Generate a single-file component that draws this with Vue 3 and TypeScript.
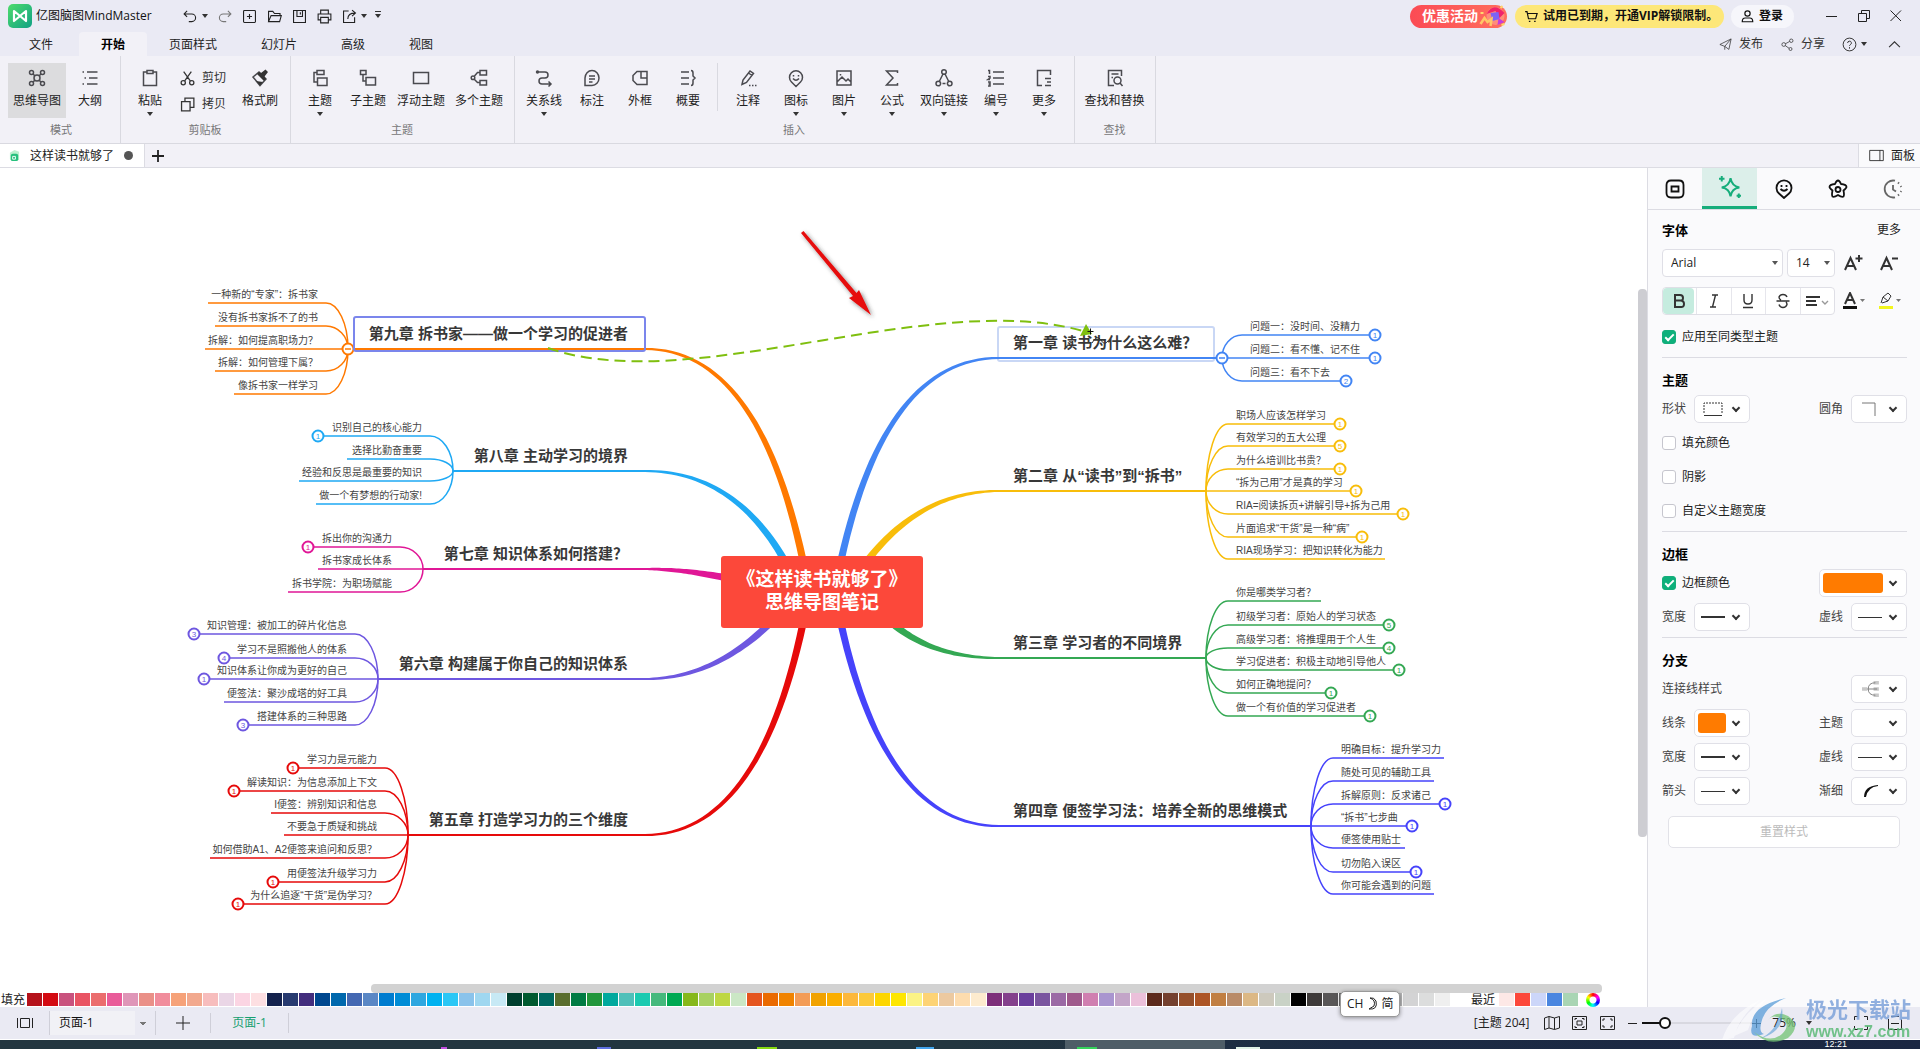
<script setup lang="ts">
import { ref } from 'vue'

interface Leaf {
  text: string
  y: number
  end: number
  badge?: number
}

interface Branch {
  title: string
  color: string
  side: 'left' | 'right'
  y: number
  tip: number
  node: number
  bend: number
  root: [number, number]
  control: number
  selected?: 'source' | 'target'
  leaves: Leaf[]
}

interface Tool {
  icon: string
  label: string
  wide?: boolean
  menu?: boolean
  split?: boolean
}

const circle = (x: number, y: number, r: number) =>
  `M${x - r} ${y}a${r} ${r} 0 1 0 ${2 * r} 0a${r} ${r} 0 1 0 ${-2 * r} 0`

const icons: Record<string, string> = {
  undo: 'M6 3.500L2.500 7L6 10.500M2.500 7H11.500a4.500 4.500 0 0 1 0 9H8',
  redo: 'M14 3.500L17.500 7L14 10.500M17.500 7H8.500a4.500 4.500 0 0 0 0 9H12',
  create: 'M4 3H16a1 1 0 0 1 1 1V16a1 1 0 0 1-1 1H4a1 1 0 0 1-1-1V4a1 1 0 0 1 1-1M10 7V13M7 10H13',
  open: 'M3 16V4H8L10 6.500H16.500V9M3 16L6 9H18L16 16Z',
  save: 'M3 3H17V17H3ZM7 3V10H13.500V3M11 5V7.500',
  print: 'M5.500 7V2.500H14.500V7M5.500 14H2.500V7H17.500V14H14.500M5.500 11H14.500V17.500H5.500Z',
  exportFile: 'M9 3.500H3V17H16V11M8 13C8 8 11 6 16.500 6M13 2.500L17 6L13 9.500',
  mind: circle(10, 10, 3) + circle(4.5, 4.5, 2) + circle(15.5, 4.5, 2) + circle(4.5, 15.5, 2) + circle(15.5, 15.5, 2) + 'M6 6L8 8M14 6L12 8M6 14L8 12M14 14L12 12',
  outline: 'M7 4H17.500M9 10H17.500M7 16H17.500M2.500 4H4M4.500 10H6M2.500 16H4',
  paste: 'M7 4H3.500V17.500H16.500V4H13M7 2.500H13V5.500H7Z',
  cut: circle(5, 15, 2.5) + circle(15, 15, 2.5) + 'M6.500 13L14.500 2M13.500 13L5.500 2',
  copy: 'M3 6.500H13V17.500H3ZM7 6V2.500H17.500V13.500H13.500',
  topic: 'M7 2.500H14V6.500H7ZM7 4.500H4V14H7M7.500 10H17V17.500H7.500Z',
  subtopic: 'M2.500 2.500H8V6.500H2.500ZM5 6.500V13H8M8 9.500H17.500V17H8Z',
  floating: 'M2.500 4.500H17.500V15.500H2.500Z',
  multi: 'M11 2.500H17.500V7H11ZM11 12.500H17.500V17H11ZM11 4.500H8.500L5.500 8M5.500 11.500L8.500 14.500H11' + circle(4, 9.7, 1.8),
  relation: 'M3 4H11a3 3 0 0 1 0 6H8a3 3 0 0 0 0 6H17M14.500 13.500L17 16L14.500 18.500' + circle(3.5, 4, 1),
  callout: 'M3 17.500V10a7 7.500 0 1 1 7 7.500ZM7 8H13M7 11H13M7 14H10.500',
  boundary: 'M7 3.500H17V16.500H7L3 12.500V7.500ZM11 3.500V10H17',
  summary: 'M3 4H11M3 10H11M3 16H11M13 2.500Q15 2.500 15 5V8L17 10L15 12V15Q15 17.500 13 17.500',
  note: 'M4 16.500L5 12L12 3L15.500 5.500L8.500 14.500ZM10.500 5L14 7.500M11 17.500H12.500M14 17.500H15.500M17 17.500H18.500',
  marker: 'M10 18.500L5.500 14A6.500 6.500 0 1 1 14.500 14ZM7.500 7V8.500M12.500 7V8.500M7 10.500Q10 14 13 10.500',
  picture: 'M3 3H17V17H3ZM3 14L8 9L12 13L14 11L17 14M6.500 6V7.500',
  formula: 'M15.500 5V3H4.500L11 10L4.500 17H15.500V15',
  link: circle(10, 4, 2.3) + circle(4.3, 15.5, 2.3) + circle(15.7, 15.5, 2.3) + 'M9 6L5.500 13M11 6L14.500 13M8.500 15.500H11.500',
  numbering: 'M7 4H18M7 10H18M7 16H18M2 2.500H3.500V6M2 8.500H4V10L2 11.500H4M2 14H4V18H2M2.500 16H4',
  more: 'M8 17.500H3.500V2.500H16.500V7M11 10.500H17M13 14H17M11 17.500H17',
  find: 'M16.500 8V2.500H3.500V17.500H9M6.500 6H13.500M6.500 9.500H8' + circle(12.5, 12.5, 3.5) + 'M15 15L17.500 18',
  cart: 'M1.500 3.500H4L6 13H15.500L17.500 6H5M6.500 16.500H8.500M13.500 16.500H15.500',
  user: circle(10, 6, 3.5) + 'M3 17Q3 12 7 12H13Q17 12 17 17Z',
  send: 'M2.500 10L17.500 2.500L14.500 16.500L9 12.500ZM17 3L9 12.500V17',
  share: circle(5, 10, 2.5) + circle(15, 5, 2.3) + circle(14, 16, 2) + 'M7.200 9L12.800 6M7 11.500L12 15',
  help: circle(10, 10, 8.5) + 'M7.500 8a2.500 2.500 0 1 1 3.500 2.300Q10 11 10 12M10 13.500V15.500',
  panel: 'M2 4H18V16H2ZM14 4V16',
  tabShape: 'M6 1.500H14Q18.500 1.500 18.500 6V14Q18.500 18.500 14 18.500H6Q1.500 18.500 1.500 14V6Q1.500 1.500 6 1.500M6.500 7.500H13.500V12.500H6.500Z',
  tabStyle: 'M10.500 2Q11.500 9 18.500 10.500Q11.500 11.500 10.500 18.500Q9.500 11.500 2.500 10.500Q9.500 9 10.500 2M2.500 0V5M0 2.500H5M18 16V20M16 18H20',
  tabSticker: 'M10 19L5 14.500A7.500 7.500 0 1 1 15 14.500ZM7.500 6V8M12.500 6V8M6.500 10Q10 13.500 13.500 10',
  tabClip: 'M10 1.500Q11.500 1.500 13 5Q18.500 5.500 18.500 8Q18.500 9 15.500 11.500Q16.500 16 15.500 17.500Q14 18.500 10 16Q6 18.500 4.500 17.500Q3.500 16 4.500 11.500Q1.500 9 1.500 8Q1.500 5.500 7 5Q8.500 1.500 10 1.500' + circle(10, 10.5, 2.5),
  tabHistory: 'M12 18.300A8.500 8.500 0 1 1 12 1.700M10 6V10.500L13 12.500M15 3.500L16 4.500M17.700 7L18.200 8M18.200 12L17.700 13M16 15.500L15 16.500',
}

const quick = ['create', 'open', 'save', 'print']
const menus = ['文件', '开始', '页面样式', '幻灯片', '高级', '视图']

const topicTools: Tool[] = [
  { icon: 'topic', label: '主题', menu: true },
  { icon: 'subtopic', label: '子主题' },
  { icon: 'floating', label: '浮动主题', wide: true },
  { icon: 'multi', label: '多个主题', wide: true },
]
const insertTools: Tool[] = [
  { icon: 'relation', label: '关系线', menu: true },
  { icon: 'callout', label: '标注' },
  { icon: 'boundary', label: '外框' },
  { icon: 'summary', label: '概要' },
  { icon: 'note', label: '注释', split: true },
  { icon: 'marker', label: '图标', menu: true },
  { icon: 'picture', label: '图片', menu: true },
  { icon: 'formula', label: '公式', menu: true },
  { icon: 'link', label: '双向链接', wide: true, menu: true },
  { icon: 'numbering', label: '编号', menu: true },
  { icon: 'more', label: '更多', menu: true },
]

const panelTabs = [
  { icon: 'tabShape', name: '页面' },
  { icon: 'tabStyle', name: '样式' },
  { icon: 'tabSticker', name: '图标' },
  { icon: 'tabClip', name: '剪贴画' },
  { icon: 'tabHistory', name: '历史' },
]

const applyAll = ref(true)
const fillColor = ref(false)
const shadow = ref(false)
const customWidth = ref(false)
const borderColor = ref(true)
const zoomLevel = ref(75)

const branches: Branch[] = [
  {
    title: '第九章 拆书家——做一个学习的促进者', color: '#ff7900', side: 'left', y: 349, tip: 645, node: 348, bend: 326,
    root: [802, 556], control: 758, selected: 'source',
    leaves: [
      { text: '一种新的“专家”：拆书家', y: 303, end: 208 },
      { text: '没有拆书家拆不了的书', y: 326, end: 215 },
      { text: '拆解：如何提高职场力？', y: 349, end: 205 },
      { text: '拆解：如何管理下属？', y: 371, end: 215 },
      { text: '像拆书家一样学习', y: 394, end: 234 },
    ],
  },
  {
    title: '第八章 主动学习的境界', color: '#1fa9f4', side: 'left', y: 471, tip: 645, node: 453, bend: 430,
    root: [782, 556], control: 733,
    leaves: [
      { text: '识别自己的核心能力', y: 436, end: 318, badge: 1 },
      { text: '选择比勤奋重要', y: 459, end: 347 },
      { text: '经验和反思是最重要的知识', y: 481, end: 299 },
      { text: '做一个有梦想的行动家!', y: 504, end: 316 },
    ],
  },
  {
    title: '第七章 知识体系如何搭建？', color: '#e01796', side: 'left', y: 569, tip: 645, node: 423, bend: 400,
    root: [722, 577], control: 682,
    leaves: [
      { text: '拆出你的沟通力', y: 547, end: 308, badge: 1 },
      { text: '拆书家成长体系', y: 569, end: 318 },
      { text: '拆书学院：为职场赋能', y: 592, end: 288 },
    ],
  },
  {
    title: '第六章 构建属于你自己的知识体系', color: '#6e57e0', side: 'left', y: 679, tip: 645, node: 378, bend: 355,
    root: [765, 628], control: 712,
    leaves: [
      { text: '知识管理：被加工的碎片化信息', y: 634, end: 194, badge: 3 },
      { text: '学习不是照搬他人的体系', y: 658, end: 224, badge: 4 },
      { text: '知识体系让你成为更好的自己', y: 679, end: 204, badge: 1 },
      { text: '便签法：聚沙成塔的好工具', y: 702, end: 224 },
      { text: '搭建体系的三种思路', y: 725, end: 243, badge: 3 },
    ],
  },
  {
    title: '第五章 打造学习力的三个维度', color: '#e60a0a', side: 'left', y: 835, tip: 645, node: 408, bend: 385,
    root: [802, 628], control: 758,
    leaves: [
      { text: '学习力是元能力', y: 768, end: 293, badge: 1 },
      { text: '解读知识：为信息添加上下文', y: 791, end: 234, badge: 1 },
      { text: 'I便签：辨别知识和信息', y: 813, end: 271 },
      { text: '不要急于质疑和挑战', y: 835, end: 284 },
      { text: '如何借助A1、A2便签来追问和反思？', y: 858, end: 210 },
      { text: '用便签法升级学习力', y: 882, end: 273, badge: 1 },
      { text: '为什么追逐“干货”是伪学习？', y: 904, end: 238, badge: 1 },
    ],
  },
  {
    title: '第一章 读书为什么这么难？', color: '#4285f4', side: 'right', y: 358, tip: 999, node: 1222, bend: 1242,
    root: [842, 556], control: 886, selected: 'target',
    leaves: [
      { text: '问题一：没时间、没精力', y: 335, end: 1375, badge: 1 },
      { text: '问题二：看不懂、记不住', y: 358, end: 1375, badge: 1 },
      { text: '问题三：看不下去', y: 381, end: 1346, badge: 2 },
    ],
  },
  {
    title: '第二章 从“读书”到“拆书”', color: '#f8bd0a', side: 'right', y: 491, tip: 999, node: 1206, bend: 1228,
    root: [871, 556], control: 922,
    leaves: [
      { text: '职场人应该怎样学习', y: 424, end: 1340, badge: 1 },
      { text: '有效学习的五大公理', y: 446, end: 1340, badge: 5 },
      { text: '为什么培训比书贵？', y: 469, end: 1340, badge: 1 },
      { text: '“拆为己用”才是真的学习', y: 491, end: 1356, badge: 1 },
      { text: 'RIA=阅读拆页+讲解引导+拆为己用', y: 514, end: 1403, badge: 1 },
      { text: '片面追求“干货”是一种“病”', y: 537, end: 1362, badge: 1 },
      { text: 'RIA现场学习：把知识转化为能力', y: 559, end: 1385 },
    ],
  },
  {
    title: '第三章 学习者的不同境界', color: '#34a853', side: 'right', y: 658, tip: 999, node: 1206, bend: 1228,
    root: [898, 628], control: 935,
    leaves: [
      { text: '你是哪类学习者？', y: 601, end: 1321 },
      { text: '初级学习者：原始人的学习状态', y: 625, end: 1389, badge: 5 },
      { text: '高级学习者：将推理用于个人生', y: 648, end: 1389, badge: 4 },
      { text: '学习促进者：积极主动地引导他人', y: 670, end: 1399, badge: 1 },
      { text: '如何正确地提问？', y: 693, end: 1331, badge: 1 },
      { text: '做一个有价值的学习促进者', y: 716, end: 1370, badge: 1 },
    ],
  },
  {
    title: '第四章 便签学习法：培养全新的思维模式', color: '#4643fb', side: 'right', y: 826, tip: 999, node: 1311, bend: 1333,
    root: [842, 628], control: 886,
    leaves: [
      { text: '明确目标：提升学习力', y: 758, end: 1444 },
      { text: '随处可见的辅助工具', y: 781, end: 1434 },
      { text: '拆解原则：反求诸己', y: 804, end: 1445, badge: 1 },
      { text: '“拆书”七步曲', y: 826, end: 1412, badge: 1 },
      { text: '便签使用贴士', y: 848, end: 1405 },
      { text: '切勿陷入误区', y: 872, end: 1416, badge: 1 },
      { text: '你可能会遇到的问题', y: 894, end: 1434 },
    ],
  },
]

/** Outline of a quadratic stroke that thickens from the topic towards the root. */
function taper(b: Branch): string {
  const [rx, ry] = b.root
  const len = Math.hypot(rx - b.control, ry - b.y)
  const ex = rx + ((rx - b.control) / len) * 4
  const ey = ry + ((ry - b.y) / len) * 4
  const upper: string[] = []
  const lower: string[] = []
  for (let i = 0; i <= 32; i++) {
    const t = i / 32
    const u = 1 - t
    const x = u * u * b.tip + 2 * u * t * b.control + t * t * ex
    const y = u * u * b.y + 2 * u * t * b.y + t * t * ey
    const dx = 2 * u * (b.control - b.tip) + 2 * t * (ex - b.control)
    const dy = 2 * t * (ey - b.y)
    const d = Math.hypot(dx, dy)
    const w = 1 + 2.6 * t
    upper.push(`${(x - (dy / d) * w).toFixed(1)} ${(y + (dx / d) * w).toFixed(1)}`)
    lower.unshift(`${(x + (dy / d) * w).toFixed(1)} ${(y - (dx / d) * w).toFixed(1)}`)
  }
  return `M${upper.concat(lower).join('L')}Z`
}

function leafPath(b: Branch, l: Leaf): string {
  const stop = l.badge ? l.end + (b.side === 'left' ? 5 : -5) : l.end
  const cx = b.bend + (b.node - b.bend) * 0.55
  const cy = l.y + (b.y - l.y) * 0.45
  return `M${stop} ${l.y}H${b.bend}C${cx} ${l.y} ${b.node} ${cy} ${b.node} ${b.y}`
}

const leafX = (b: Branch) => (b.side === 'left' ? b.bend - 8 : b.bend + 8)

const swatches = (
  'b5121b d30a12 c9527e e95464 eb6d6e e95c9a df96b8 ea9088 f18d9c f6a279 f2a98e f7bdbd ead6e6 fbd5e3 fddfe2 ' +
  '14224d 283b70 432e7d 00488f 0068ad 4468b2 5a87c5 007ccf 008cd6 2ea7e0 00b2f0 2bc7f5 8ac3eb 9fd7f0 c7e9f5 ' +
  '003f2e 005a2f 006860 5a6e2e 007b43 21963b 00a99d 4fc0b9 1bcab0 45b97c 00a952 86b81b a8d161 bed742 cbe7c5 ' +
  'e5551f ea6a00 f08300 f39c56 f1a200 faae00 fcb83c fcc93a fdd600 fee600 fbf385 fdd375 ecc9a0 fddcae fdebce ' +
  '7d2f7a 84408c 6a3f9c 7a559f 9b6aa5 9f5a8c d07fb0 a995cf c3a5c8 ebc0da 5c2a1c 75412f 96502b ad5525 c17f42 ' +
  'b98b68 dcb885 cdc9bd c9d2c6 000000 3e3a39 595757 727171 888888 9fa0a0 b5b5b6 d3d3d4 dcdddd efefef ffffff'
).split(' ')
const recent = ['fde8e6', 'fc483a', 'ccd6f9', '4a86e0', 'a9d5b4']
</script>

<template>
  <div class="app">
    <header class="titlebar">
      <svg class="logo" viewBox="0 0 24 24">
        <defs>
          <linearGradient id="logoFill" x1="0" y1="0" x2="1" y2="1">
            <stop offset="0" stop-color="#4fdc6c" />
            <stop offset="1" stop-color="#10a184" />
          </linearGradient>
        </defs>
        <rect width="24" height="24" rx="5" fill="url(#logoFill)" />
        <path d="M6 17V7L18 17V7L12.500 11.500M6 17L11.500 12.500" fill="none" stroke="#fff" stroke-width="2.200" stroke-linejoin="round" stroke-linecap="round" />
      </svg>
      <span class="app-name">亿图脑图MindMaster</span>
      <nav class="quick" aria-label="快速访问">
        <button class="qbtn" aria-label="撤销"><svg viewBox="0 0 20 20"><path :d="icons.undo" /></svg></button>
        <i class="caret"></i>
        <button class="qbtn dim" aria-label="重做"><svg viewBox="0 0 20 20"><path :d="icons.redo" /></svg></button>
        <button v-for="q in quick" :key="q" class="qbtn" :aria-label="q"><svg viewBox="0 0 20 20"><path :d="icons[q]" /></svg></button>
        <button class="qbtn" aria-label="导出"><svg viewBox="0 0 20 20"><path :d="icons.exportFile" /></svg></button>
        <i class="caret"></i>
        <i class="caret overline"></i>
      </nav>
      <div class="title-right">
        <button class="promo">
          优惠活动
          <svg viewBox="0 0 28 24">
            <circle cx="17" cy="12" r="9" fill="#ff8d7a" />
            <path d="M8 10Q15 -3 26 9L21 14L17 7Z" fill="#f0246b" />
            <path d="M12 9L20 8L21 15L14 17Z" fill="#7d63f5" />
            <path d="M2 20L6 14L9 18L13 15L12 22" fill="none" stroke="#ffc766" stroke-width="2.500" />
            <path d="M20 14L26 18L19 21Z" fill="#c43ddb" />
            <path d="M2 9H5M22 4L24 2M23 21L26 20" stroke="#ffd76e" stroke-width="2" />
          </svg>
        </button>
        <button class="vip"><svg viewBox="0 0 20 20"><path :d="icons.cart" /></svg>试用已到期，开通VIP解锁限制。</button>
        <button class="login"><svg viewBox="0 0 20 20"><path :d="icons.user" /></svg>登录</button>
        <button class="win" aria-label="最小化"><svg viewBox="0 0 12 12"><path d="M0 6.500H11" /></svg></button>
        <button class="win" aria-label="还原"><svg viewBox="0 0 12 12"><path d="M.5 3.500H8.500V11.500H.5ZM3.500 3.500V.5H11.500V8.500H8.500" /></svg></button>
        <button class="win" aria-label="关闭"><svg viewBox="0 0 12 12"><path d="M.5 .5L11 11M11 .5L.5 11" /></svg></button>
      </div>
    </header>

    <div class="menubar">
      <nav class="menus">
        <button v-for="m in menus" :key="m" class="menu" :class="{ on: m === '开始' }">{{ m }}</button>
      </nav>
      <div class="menu-right">
        <button class="mlink"><svg viewBox="0 0 20 20"><path :d="icons.send" /></svg>发布</button>
        <button class="mlink"><svg viewBox="0 0 20 20"><path :d="icons.share" /></svg>分享</button>
        <button class="mlink help" aria-label="帮助"><svg viewBox="0 0 20 20"><path :d="icons.help" /></svg><i class="caret"></i></button>
        <button class="mlink" aria-label="收起功能区"><svg class="chev" viewBox="0 0 12 12"><path d="M1 8.500L6 3.500L11 8.500" /></svg></button>
      </div>
    </div>

    <section class="ribbon">
      <div class="group first">
        <div class="tools">
          <button class="tool wide on"><svg viewBox="0 0 20 20"><path :d="icons.mind" /></svg><span>思维导图</span></button>
          <button class="tool"><svg viewBox="0 0 20 20"><path :d="icons.outline" /></svg><span>大纲</span></button>
        </div>
        <p class="gname">模式</p>
      </div>
      <div class="group">
        <div class="tools">
          <button class="tool"><svg viewBox="0 0 20 20"><path :d="icons.paste" /></svg><span>粘贴</span><i class="caret"></i></button>
          <div class="stack">
            <button class="mini"><svg viewBox="0 0 20 20"><path :d="icons.cut" /></svg>剪切</button>
            <button class="mini"><svg viewBox="0 0 20 20"><path :d="icons.copy" /></svg>拷贝</button>
          </div>
          <button class="tool">
            <svg viewBox="0 0 20 20">
              <path d="M3 9L9 4L16 11L10 17.500Z" />
              <path class="solid" d="M9 4L11 5L15.500 1.500L18 4L14.500 8.500L16 11L14 13L7 6ZM6 13L10 17.500L13 14Z" />
            </svg>
            <span>格式刷</span>
          </button>
        </div>
        <p class="gname">剪贴板</p>
      </div>
      <div class="group">
        <div class="tools">
          <button v-for="t in topicTools" :key="t.label" class="tool" :class="{ wide: t.wide }">
            <svg viewBox="0 0 20 20"><path :d="icons[t.icon]" /></svg><span>{{ t.label }}</span><i v-if="t.menu" class="caret"></i>
          </button>
        </div>
        <p class="gname">主题</p>
      </div>
      <div class="group">
        <div class="tools">
          <button v-for="t in insertTools" :key="t.label" class="tool" :class="{ wide: t.wide, split: t.split }">
            <svg viewBox="0 0 20 20"><path :d="icons[t.icon]" /></svg><span>{{ t.label }}</span><i v-if="t.menu" class="caret"></i>
          </button>
        </div>
        <p class="gname">插入</p>
      </div>
      <div class="group">
        <div class="tools">
          <button class="tool widest"><svg viewBox="0 0 20 20"><path :d="icons.find" /></svg><span>查找和替换</span></button>
        </div>
        <p class="gname">查找</p>
      </div>
    </section>

    <div class="docbar">
      <div class="doc">
        <svg viewBox="0 0 12 14"><path d="M1 4L6 1L11 3V12L3 13L1 11Z" fill="#bdf0cf" /><rect x="2" y="5" width="8" height="8" rx="2" fill="#27c07d" /><path d="M4 11V8H7V11Z" stroke="#fff" /></svg>
        <span>这样读书就够了</span><i class="dirty"></i>
      </div>
      <button class="add" aria-label="新建文档"><svg viewBox="0 0 12 12"><path d="M6 0V12M0 6H12" /></svg></button>
      <button class="toggle"><svg viewBox="0 0 20 20"><path :d="icons.panel" /></svg>面板</button>
    </div>

    <main class="work">
      <div class="stage">
        <div class="viewport">
          <svg class="map" width="1638" height="816" viewBox="0 168 1638 816">
            <defs>
              <filter id="drop" x="-30%" y="-30%" width="160%" height="160%">
                <feDropShadow dx="2" dy="2" stdDeviation="2" flood-color="#333" flood-opacity=".6" />
              </filter>
            </defs>
            <rect class="hint" x="998" y="327" width="216" height="34" rx="2" />
            <g v-for="b in branches" :key="b.title" :stroke="b.color">
              <path :d="taper(b)" :fill="b.color" stroke="none" />
              <path :d="`M${b.tip + (b.side === 'left' ? 1 : -1)} ${b.y}H${b.node}`" stroke-width="2" />
              <template v-for="l in b.leaves" :key="l.text">
                <path :d="leafPath(b, l)" stroke-width="1.500" />
                <text class="leaf" :x="leafX(b)" :y="l.y - 5" :text-anchor="b.side === 'left' ? 'end' : 'start'">{{ l.text }}</text>
                <template v-if="l.badge">
                  <circle class="knob" :cx="l.end" :cy="l.y" r="5.500" />
                  <text class="count" :x="l.end" :y="l.y + 3" :fill="b.color">{{ l.badge }}</text>
                </template>
              </template>
              <template v-if="b.selected">
                <circle class="knob" :cx="b.node" :cy="b.y" r="5.500" />
                <path :d="`M${b.node - 3} ${b.y}H${b.node + 3}`" stroke-width="1.500" />
              </template>
              <text class="chapter" :x="b.side === 'left' ? 628 : 1013" :y="b.y - 10" :text-anchor="b.side === 'left' ? 'end' : 'start'">{{ b.title }}</text>
            </g>
            <rect class="picked" x="354" y="317" width="291" height="34" rx="2" />
            <rect x="721" y="556" width="202" height="72" rx="3" fill="#fc483a" />
            <text class="root" x="822" y="586">《这样读书就够了》</text>
            <text class="root" x="822" y="609">思维导图笔记</text>
            <path class="link" d="M548 348C690 398 930 288 1083 331" />
            <path d="M1080 336L1086 324L1092 334Z" fill="#7fbf0f" />
            <path d="M1087.500 331.500H1093.500M1090.500 328.500V334.500" stroke="#111" />
            <path d="M1092 343Q1097 334 1101 340Q1104 346 1108 341" stroke="#333" />
            <path filter="url(#drop)" fill="#e60d0d" d="M803.500 231L856.500 293L859 290L871 315L849 298L853 296L801 233Z" />
          </svg>
          <div class="vbar"></div>
        </div>
        <div class="hbar"></div>
        <div class="palette">
          <span class="plabel">填充</span>
          <i v-for="(s, i) in swatches" :key="i" class="sw" :style="{ background: '#' + s }"></i>
          <span class="rlabel">最近</span>
          <i v-for="r in recent" :key="r" class="sw" :style="{ background: '#' + r }"></i>
          <button class="wheel" aria-label="更多颜色"></button>
          <div class="ime">
            CH
            <svg viewBox="0 0 12 14"><path d="M4 1Q10 3 8 9L3 12Q12 13 10 4Q8 0 4 1" /></svg>
            简
          </div>
        </div>
      </div>

      <aside class="panel">
        <nav class="ptabs">
          <button v-for="p in panelTabs" :key="p.icon" class="ptab" :class="{ on: p.icon === 'tabStyle', faint: p.icon === 'tabHistory' }" :aria-label="p.name">
            <svg viewBox="0 0 20 20"><path :d="icons[p.icon]" /></svg>
          </button>
        </nav>
        <section class="sec">
          <div class="head"><h2>字体</h2><a href="#">更多</a></div>
          <div class="row gap">
            <label class="sel family"><select aria-label="字体"><option>Arial</option></select></label>
            <label class="sel size"><select aria-label="字号"><option>14</option></select></label>
            <button class="ghost" aria-label="增大字号"><svg viewBox="0 0 20 16"><path class="thick" d="M2 15L7.500 3L13 15M4 11H11M16 0V7M12.500 3.500H19.500" /></svg></button>
            <button class="ghost" aria-label="减小字号"><svg viewBox="0 0 20 16"><path class="thick" d="M2 15L7.500 3L13 15M4 11H11M13 3.500H19" /></svg></button>
          </div>
          <div class="row gap">
            <div class="formats">
              <button class="fmt on" aria-label="加粗"><svg viewBox="0 0 16 16"><path class="heavy" d="M4 2H9Q12 2 12 5T9 7.500H4ZM4 7.500H9.500Q13 7.500 13 11T9.500 14H4Z" /></svg></button>
              <button class="fmt" aria-label="斜体"><svg viewBox="0 0 16 16"><path d="M6 2H12M4 14H10M9.500 2L6.500 14" /></svg></button>
              <button class="fmt" aria-label="下划线"><svg viewBox="0 0 16 16"><path d="M4 1V7Q4 11 8 11T12 7V1M3 14.500H13" /></svg></button>
              <button class="fmt" aria-label="删除线"><svg viewBox="0 0 16 16"><path d="M12 4Q11 1.500 8 1.500T4 4Q4 6 6 7M1.500 8H14.500M4 11.500Q5 14.500 8 14.500T12 11.500Q12 10 11 9" /></svg></button>
              <button class="fmt" aria-label="对齐"><svg class="long" viewBox="0 0 24 16"><path class="thick" d="M1 4H15M1 8H11M1 12H12" /><path class="soft" d="M17 8L20 11L23 8" /></svg></button>
            </div>
            <button class="ghost" aria-label="字体颜色">
              <svg class="long" viewBox="0 0 24 18"><path class="thick" d="M4 12L9 1L14 12M6 8H12" /><path class="solid" d="M2 14H16V17H2Z" /><path class="grey" d="M19 7H24L21.500 10Z" /></svg>
            </button>
            <button class="ghost" aria-label="突出显示">
              <svg class="long" viewBox="0 0 24 18"><path d="M4 11L6 5L11 1L14 4L11 9L5 11M6 5L11 9" /><path class="yellow" d="M2 14H16V17H2Z" /><path class="grey" d="M19 7H24L21.500 10Z" /></svg>
            </button>
          </div>
          <label class="check apply"><input v-model="applyAll" type="checkbox" />应用至同类型主题</label>
        </section>
        <section class="sec">
          <div class="head"><h2>主题</h2></div>
          <div class="row">
            <span>形状</span>
            <button class="drop" aria-label="形状"><svg class="pic" viewBox="0 0 24 16"><path class="dots" d="M3 12V2H21V12" /><path d="M3 14.500H21" /></svg><i class="down"></i></button>
            <span class="second">圆角</span>
            <button class="drop" aria-label="圆角"><svg class="pic" viewBox="0 0 24 16"><path class="mid" d="M4 2H17V15" /></svg><i class="down"></i></button>
          </div>
          <label class="check"><input v-model="fillColor" type="checkbox" />填充颜色</label>
          <label class="check"><input v-model="shadow" type="checkbox" />阴影</label>
          <label class="check"><input v-model="customWidth" type="checkbox" />自定义主题宽度</label>
        </section>
        <section class="sec">
          <div class="head"><h2>边框</h2></div>
          <div class="row">
            <label class="check"><input v-model="borderColor" type="checkbox" />边框颜色</label>
            <button class="drop large last" aria-label="边框颜色"><i class="chip"></i><i class="down"></i></button>
          </div>
          <div class="row">
            <span>宽度</span>
            <button class="drop" aria-label="边框宽度"><svg class="pic" viewBox="0 0 24 16"><path class="thick" d="M0 8H24" /></svg><i class="down"></i></button>
            <span class="second">虚线</span>
            <button class="drop" aria-label="边框虚线"><svg class="pic" viewBox="0 0 24 16"><path d="M0 8.500H24" /></svg><i class="down"></i></button>
          </div>
        </section>
        <section class="sec final">
          <div class="head"><h2>分支</h2></div>
          <div class="row">
            <span>连接线样式</span>
            <button class="drop last" aria-label="连接线样式">
              <svg class="pic" viewBox="0 0 24 18"><path class="pale" d="M3 7H9V11H3ZM16 0H22V4H16ZM16 7H22V11H16ZM16 14H22V18H16Z" /><path class="mid" d="M9 9H20M18 2Q10 2 10 9T18 16" /></svg><i class="down"></i>
            </button>
          </div>
          <div class="row">
            <span>线条</span>
            <button class="drop colour" aria-label="线条颜色"><i class="chip"></i><i class="down"></i></button>
            <span class="second">主题</span>
            <button class="drop" aria-label="分支主题"><i class="pic"></i><i class="down"></i></button>
          </div>
          <div class="row">
            <span>宽度</span>
            <button class="drop" aria-label="分支宽度"><svg class="pic" viewBox="0 0 24 16"><path class="thick" d="M0 8H24" /></svg><i class="down"></i></button>
            <span class="second">虚线</span>
            <button class="drop" aria-label="分支虚线"><svg class="pic" viewBox="0 0 24 16"><path d="M0 8.500H24" /></svg><i class="down"></i></button>
          </div>
          <div class="row">
            <span>箭头</span>
            <button class="drop" aria-label="箭头"><svg class="pic" viewBox="0 0 24 16"><path d="M0 8.500H24" /></svg><i class="down"></i></button>
            <span class="second">渐细</span>
            <button class="drop" aria-label="渐细"><svg class="pic" viewBox="0 0 24 16"><path class="solid" d="M6 14Q6 3 20 2V3Q10 4 8 14Z" /></svg><i class="down"></i></button>
          </div>
          <button class="reset" disabled>重置样式</button>
        </section>
      </aside>
    </main>

    <footer class="status">
      <button class="sbtn lead" aria-label="页面列表"><svg viewBox="0 0 16 12"><path d="M.5 1V11M15.500 1V11M3.500 1.500H12.500V10.500H3.500Z" /></svg></button>
      <select class="page" aria-label="页面"><option>页面-1</option></select>
      <button class="sbtn plus" aria-label="添加页面"><svg viewBox="0 0 14 14"><path d="M7 0V14M0 7H14" /></svg></button>
      <button class="ptag">页面-1</button>
      <div class="srow">
        <span>[主题 204]</span>
        <button class="sbtn split" aria-label="分屏"><svg viewBox="0 0 16 14"><path d="M.5 2L5 .5V12L.5 13.500ZM5 .5L10.500 2V13.500L5 12M10.500 2L15.500 .5V12L10.500 13.500" /></svg></button>
        <button class="sbtn" aria-label="适合页面"><svg viewBox="0 0 16 14"><path d="M.5 .5H14.500V13.500H.5ZM5 5H10V9H5ZM3 4V2.500H5M12 4V2.500H10M3 10V11.500H5M12 10V11.500H10" /></svg></button>
        <button class="sbtn" aria-label="全屏"><svg viewBox="0 0 16 14"><path d="M.5 .5H14.500V13.500H.5ZM3 5V3H5M12 5V3H10M3 9V11H5M12 9V11H10" /></svg></button>
        <button class="sbtn step" aria-label="缩小"><svg viewBox="0 0 10 10"><path d="M0 5.500H9" /></svg></button>
        <input v-model="zoomLevel" class="zoom" type="range" min="40" max="240" aria-label="缩放" />
        <button class="sbtn step" aria-label="放大"><svg viewBox="0 0 10 10"><path d="M0 5.500H9M4.500 1V10" /></svg></button>
        <span class="percent">{{ zoomLevel }}%</span>
        <i class="caret"></i>
        <button class="sbtn full" aria-label="聚焦"><svg viewBox="0 0 16 14"><path d="M.5 4V.5H4M10 .5H13.500V4M13.500 10V13.500H10M4 13.500H.5V10" /></svg></button>
        <button class="sbtn last" aria-label="隐藏工具栏"><svg viewBox="0 0 16 14"><path d="M.5 3V13.500H13.500V3M3 .5H11M3 7.500H11" /></svg></button>
      </div>
    </footer>

    <div class="taskbar"><i class="task t1"></i><i class="task t2"></i><i class="task t3"></i><i class="task t4"></i><span class="current"><i></i></span><i class="task t5"></i><span class="clock">12:21</span></div>

    <div class="mark">
      <svg viewBox="0 0 84 48">
        <path d="M2 44Q10 18 40 4Q18 22 14 42ZM14 40Q22 18 46 3Q32 20 28 34Z" fill="#fff" opacity=".7" />
        <path d="M32 30Q30 10 66 2Q46 10 42 24Q38 36 44 38Q28 44 32 30" fill="#5c9fd8" opacity=".9" />
        <path d="M34 36Q50 48 62 38Q72 28 60 22Q52 18 48 24Q56 14 68 20Q82 30 68 42Q48 52 34 36" fill="#74c476" opacity=".9" />
        <path d="M34 44Q56 40 62 12Q66 38 34 44" fill="#3f8fd0" opacity=".6" />
      </svg>
      <div><b>极光下载站</b><span>www.xz7.com</span></div>
    </div>
  </div>
</template>

<style>
body {
  background: #eaeaf4;
}
</style>

<style scoped>
.app {
  position: relative;
  display: flex;
  flex-direction: column;
  min-height: 100vh;
  overflow: hidden;
  background: #eaeaf4;
  color: #222;
  font: 12px/16px "Open Sans", "Noto Sans CJK SC", sans-serif;
}
button {
  margin: 0;
  padding: 0;
  border: 0;
  background: none;
  color: inherit;
  font: inherit;
  white-space: nowrap;
}
i { display: block; flex: none; }
svg { display: block; flex: none; fill: none; stroke: currentColor; }
h2, p { margin: 0; }
.caret {
  width: 0;
  height: 0;
  border: 3px solid transparent;
  border-top: 4px solid #333;
  border-bottom: 0;
}

/* title bar */
.titlebar { display: flex; align-items: center; height: 32px; padding: 0 8px; }
.logo { width: 24px; height: 24px; stroke: none; }
.app-name { width: 144px; margin-left: 4px; color: #111; white-space: nowrap; }
.quick { display: flex; align-items: center; }
.qbtn { display: grid; place-items: center; width: 17px; height: 20px; margin-right: 8px; }
.qbtn svg { width: 17px; height: 17px; stroke-width: 1.3; }
.qbtn:first-child { margin-right: 3px; margin-left: 2px; }
.quick .caret { margin-right: 8px; }
.qbtn:nth-last-of-type(1) { margin-right: 3px; }
.qbtn.dim { color: #777; }
.caret.overline { position: relative; }
.caret.overline::before { content: ""; position: absolute; left: -3px; top: -7px; width: 6px; height: 1px; background: #333; }
.title-right { display: flex; align-items: center; margin-left: auto; }
.promo {
  display: flex;
  align-items: center;
  height: 23px;
  padding-left: 12px;
  border-radius: 12px;
  background: linear-gradient(90deg, #fb4b54, #ff6f5e);
  color: #fff;
  font-size: 14px;
  font-weight: 700;
}
.promo svg { width: 29px; height: 24px; stroke: none; }
.vip {
  display: flex;
  align-items: center;
  width: 209px;
  height: 23px;
  margin-left: 8px;
  padding-left: 9px;
  overflow: hidden;
  border-radius: 12px;
  background: #fde779;
  color: #111;
  font-weight: 700;
}
.vip svg, .login svg { width: 15px; height: 15px; margin-right: 4px; stroke-width: 1.6; }
.login {
  display: flex;
  align-items: center;
  width: 63px;
  height: 23px;
  margin: 0 8px 0 7px;
  padding-left: 9px;
  border-radius: 12px;
  background: #f6f6fb;
  color: #111;
  font-weight: 700;
}
.win { display: grid; place-items: center; width: 32px; height: 24px; margin-left: 14px; }
.win + .win { margin-left: 0; }
.win svg { width: 12px; height: 12px; }

/* menu bar */
.menubar { display: flex; height: 24px; align-items: center; }
.menus { display: flex; padding-left: 7px; }
.menu { height: 24px; padding: 2px 22px 0; }
.menu:first-child { margin-right: 4px; }
.menu.on { border-radius: 4px 4px 0 0; background: #f2f1f7; color: #000; font-weight: 700; }
.menu-right { display: flex; align-items: center; margin-left: auto; padding-right: 19px; color: #333; }
.mlink { display: flex; align-items: center; margin-left: 17px; }
.mlink svg { width: 15px; height: 15px; margin-right: 6px; }
.mlink.help svg { margin-right: 4px; stroke-width: 1.3; }
.mlink svg.chev { width: 13px; height: 13px; margin: 0 0 0 4px; }

/* ribbon */
.ribbon { display: flex; height: 87px; border-bottom: 1px solid #d9d9e0; background: #f2f1f7; }
.group {
  display: flex;
  flex-direction: column;
  padding: 7px 6px 0 5px;
  border-right: 1px solid #d9d9e0;
}
.group.first { padding-left: 8px; }
.tools { display: flex; height: 55px; }
.gname { margin-top: 4px; color: #777; font-size: 11px; text-align: center; }
.tool {
  display: flex;
  flex-direction: column;
  align-items: center;
  width: 48px;
  padding-top: 5px;
  color: #4a4a4f;
}
.tool.wide { width: 58px; }
.tool.wide:has(.caret) { width: 56px; }
.tool.widest { width: 69px; }
.tool.on { background: #dcdcde; }
.tool.split { position: relative; margin-left: 12px; }
.tool.split::before { content: ""; position: absolute; left: -7px; top: 0; width: 1px; height: 48px; background: #d9d9e0; }
.tool svg { width: 20px; height: 20px; stroke-width: 1.5; }
.tool span { margin-top: 5px; color: #222; }
.tool .caret { margin-top: 3px; }
.tool path.solid { fill: #333; stroke: none; }
.stack { display: flex; flex-direction: column; gap: 6px; width: 57px; padding: 5px 0 0 5px; }
.mini { display: flex; align-items: center; gap: 6px; height: 20px; color: #333; }
.mini svg { width: 17px; height: 17px; stroke-width: 1.5; }

/* document tabs */
.docbar { display: flex; height: 24px; border-bottom: 1px solid #dcdce3; background: #f2f1f7; box-sizing: border-box; }
.doc { display: flex; align-items: center; width: 145px; padding-left: 9px; background: #fff; border-right: 1px solid #dcdce3; box-sizing: border-box; }
.doc svg { width: 11px; height: 13px; margin-right: 10px; stroke: none; }
.dirty { width: 9px; height: 9px; margin-left: 10px; border-radius: 50%; background: #555; }
.add { width: 26px; padding-left: 7px; }
.add svg { width: 12px; height: 12px; stroke-width: 1.8; }
.toggle { display: flex; align-items: center; gap: 6px; width: 62px; margin-left: auto; padding-left: 9px; border-left: 1px solid #dcdce3; background: #fafafc; }
.toggle svg { width: 17px; height: 17px; }

/* canvas */
.work { display: flex; flex: 1; }
.stage { display: flex; flex: 1; flex-direction: column; min-width: 0; background: #fff; }
.viewport { display: flex; flex: 1; justify-content: space-between; min-width: 0; overflow: hidden; }
.map { stroke: none; font-family: "Liberation Sans", "Noto Sans CJK SC", sans-serif; }
.map text { stroke: none; }
.leaf { fill: #444; font-size: 10px; }
.chapter { fill: #383838; font-size: 15px; font-weight: 700; }
.root { fill: #fff; font-size: 19px; font-weight: 700; text-anchor: middle; }
.count { font-size: 8px; text-anchor: middle; }
.knob { fill: #fff; stroke-width: 2; }
.hint { stroke: #c9d7f5; stroke-width: 2; }
.picked { stroke: #7b86ec; stroke-width: 2; }
.link { stroke: #7fbf0f; stroke-width: 2; stroke-dasharray: 11 6; }
.vbar { flex: none; width: 9px; height: 548px; margin-top: 121px; border-radius: 4px; background: #cdcdd2; }
.hbar { height: 9px; margin: 0 45px 0 371px; border-radius: 4px; background: #d2d2d2; }
.palette { position: relative; display: flex; height: 14px; background: #fff; }
.plabel { width: 26px; padding-left: 1px; line-height: 14px; white-space: nowrap; }
.rlabel { width: 28px; padding-left: 4px; line-height: 14px; white-space: nowrap; }
.sw { width: 15px; height: 13px; margin-right: 1px; }
.wheel {
  width: 14px;
  height: 14px;
  margin-left: 7px;
  border-radius: 50%;
  background: radial-gradient(#fff 3px, transparent 4px), conic-gradient(red, #f0f, blue, cyan, lime, yellow, red);
}
.ime {
  position: absolute;
  left: 1340px;
  top: -2px;
  display: flex;
  align-items: center;
  gap: 3px;
  height: 24px;
  padding: 0 6px;
  border: 1px solid #999;
  border-radius: 5px;
  background: #fff;
  box-shadow: 0 1px 4px #0006;
}
.ime svg { width: 12px; height: 14px; }

/* format panel */
.panel { width: 272px; border-left: 1px solid #dcdce3; background: #fafafc; }
.ptabs { display: flex; height: 41px; border-bottom: 1px solid #dcdce3; }
.ptab { display: grid; flex: 1; place-items: center; color: #111; }
.ptab svg { width: 20px; height: 20px; stroke-width: 1.8; }
.ptab.on { border-bottom: 3px solid #16ad7b; background: #dcefea; color: #16ad7b; }
.ptab.on svg { width: 22px; height: 22px; }
.ptab.faint { color: #666; }
.sec { margin: 0 13px 0 14px; padding: 10px 0 3px; border-bottom: 1px solid #dcdce3; }
.ptabs + .sec { padding-top: 8px; }
.sec.final { border: 0; }
.head { display: flex; align-items: center; justify-content: space-between; height: 24px; }
.head h2 { color: #000; font-size: 13px; font-weight: 700; }
.head a { padding-right: 6px; color: #222; text-decoration: none; }
.row { display: flex; align-items: center; height: 34px; color: #444; }
.row.gap { margin-top: 4px; }
.row span { white-space: nowrap; }
.row .second { margin-left: auto; }
.sel { position: relative; display: flex; }
.sel::after { content: ""; position: absolute; right: 5px; top: 12px; border: 3px solid transparent; border-top: 4px solid #555; border-bottom: 0; }
.sel select {
  width: 100%;
  height: 28px;
  padding: 0 8px;
  border: 1px solid #dfdfe6;
  border-radius: 4px;
  background: #fff;
  color: #222;
  font: inherit;
  appearance: none;
}
.family { width: 121px; margin-right: 4px; }
.size { width: 48px; }
.ghost { display: grid; place-items: center; width: 36px; height: 28px; color: #333; }
.ghost svg { width: 20px; height: 16px; }
.ghost svg.long { width: 24px; height: 18px; }
.thick { stroke-width: 2; }
.formats { display: flex; width: 173px; height: 28px; border: 1px solid #dfdfe6; border-radius: 4px; background: #fff; box-sizing: border-box; }
.fmt { display: grid; flex: 1; place-items: center; border-left: 1px solid #e6e6ec; color: #333; }
.fmt svg { width: 16px; height: 16px; stroke-width: 1.4; }
.fmt svg.long { width: 24px; }
.fmt.on { flex: none; width: 31px; margin-right: 2px; border: 0; border-radius: 4px; background: #c5ecdf; }
.heavy { stroke-width: 2; }
.soft { stroke: #999; }
.panel path.solid { fill: #111; stroke: none; }
.panel path.yellow { fill: #f2f51c; stroke: none; }
.panel path.grey { fill: #777; stroke: none; }
.panel path.pale { fill: #c8c8c8; stroke: none; }
.mid { stroke: #777; }
.dots { stroke-dasharray: 2 1; }
.check { display: flex; align-items: center; gap: 6px; height: 34px; color: #222; }
.check.apply { margin-top: 2px; }
.check input {
  display: grid;
  flex: none;
  place-items: center;
  width: 14px;
  height: 14px;
  margin: 0;
  border: 1px solid #c6c6ce;
  border-radius: 3px;
  background: #fff;
  appearance: none;
}
.check input:checked { border-color: #16ad7b; background: #0db07b; }
.check input:checked::after { content: ""; width: 3px; height: 7px; margin-bottom: 2px; border: solid #fff; border-width: 0 2px 2px 0; transform: rotate(45deg); }
.drop {
  display: flex;
  align-items: center;
  justify-content: space-between;
  width: 56px;
  height: 28px;
  margin-left: 8px;
  padding: 0 10px 0 6px;
  border: 1px solid #e0e0e7;
  border-radius: 5px;
  background: #fff;
  color: #333;
}
.drop.last { margin-left: auto; }
.drop.large { width: 88px; padding-left: 3px; }
.drop.colour { padding-left: 3px; }
.pic { width: 24px; height: 16px; }
.chip { width: 28px; height: 20px; border-radius: 3px; background: #ff7b00; }
.large .chip { width: 60px; }
.down { width: 4px; height: 4px; margin-top: -3px; border: solid #333; border-width: 0 2px 2px 0; transform: rotate(45deg); }
.reset { display: block; width: 232px; height: 32px; margin: 8px 0 0 6px; border: 1px solid #e2e2e8; border-radius: 5px; background: #fff; color: #bbb; }

/* status bar */
.status { display: flex; align-items: center; height: 32px; border-bottom: 1px solid #fff; background: #eaeaf3; }
.sbtn svg { width: 16px; height: 14px; }
.sbtn.lead { width: 49px; padding-left: 17px; }
.sbtn.lead svg { height: 12px; }
.page {
  width: 107px;
  height: 24px;
  padding: 0 9px;
  border: solid #cfcfd8;
  border-width: 0 1px;
  border-radius: 0;
  background: linear-gradient(#777, #777) 90px 11px / 6px 1px no-repeat, linear-gradient(#777, #777) 91px 12px / 4px 1px no-repeat, linear-gradient(#777, #777) 92px 13px / 2px 1px no-repeat, linear-gradient(90deg, #f1f1f6 85px, #eaeaf3 85px);
  color: #111;
  font: inherit;
  appearance: none;
}
.sbtn.plus { width: 54px; padding-left: 20px; }
.sbtn.plus svg { width: 14px; }
.ptag { width: 79px; height: 20px; border: solid #cfcfd8; border-width: 0 1px; color: #16a070; }
.srow { display: flex; align-items: center; margin-left: auto; padding-right: 16px; white-space: nowrap; }
.srow .sbtn { margin-left: 12px; }
.srow .sbtn.split { margin-left: 15px; }
.srow .sbtn.step { margin-left: 12px; }
.step svg { width: 10px; height: 10px; }
.zoom { width: 110px; height: 14px; margin: 0 0 0 4px; background: linear-gradient(90deg, #111 20px, #d8d8e0 20px) center / 100% 2px no-repeat; appearance: none; }
.zoom::-webkit-slider-thumb { width: 12px; height: 12px; border: 2px solid #111; border-radius: 50%; background: #fff; appearance: none; }
.srow .zoom + .sbtn.step { margin-left: 0; }
.percent { margin: 0 10px; }
.srow .sbtn.full { margin-left: 42px; }
.srow .sbtn.last { margin-left: 18px; }

/* desktop taskbar */
.taskbar { display: flex; height: 9px; overflow: hidden; padding-right: 73px; background: linear-gradient(90deg, #22353f, #22353f 50%, #1c2b44 70%, #1b2742); color: #fff; }
.task { width: 14px; height: 2px; margin-top: 7px; }
.t1 { width: 6px; margin-left: 441px; background: #c04de0; }
.t2 { margin-left: 150px; background: #5f6fe0; }
.t3 { width: 20px; margin-left: 146px; background: #86d911; }
.t4 { width: 18px; margin-left: 139px; background: #43a6ee; }
.current { flex: none; width: 160px; margin-left: 131px; background: #4e5d67; }
.current i { width: 20px; height: 2px; margin: 7px 0 0 12px; background: #35d35b; }
.t5 { width: 24px; margin-left: 11px; background: #dff0e5; }
.clock { margin-left: auto; font: 9px/9px "Liberation Sans", sans-serif; }

/* corner mark */
.mark { position: absolute; right: 9px; bottom: 5px; display: flex; gap: 2px; opacity: .85; pointer-events: none; }
.mark svg { width: 84px; height: 48px; stroke: none; }
.mark div { display: flex; flex-direction: column; }
.mark b { color: #7ea3da; font-size: 21px; line-height: 26px; }
.mark span { color: #5dba78; font: 700 16px/20px "Liberation Sans", sans-serif; }
</style>
